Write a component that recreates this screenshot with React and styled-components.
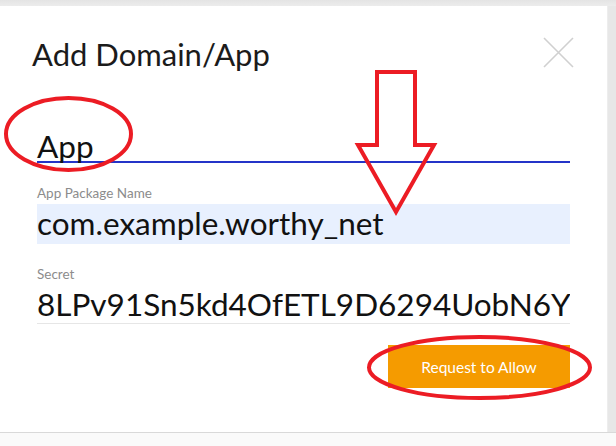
import React from "react";
import styled, { createGlobalStyle } from "styled-components";

const GlobalStyle = createGlobalStyle`
  html, body { margin: 0; padding: 0; }
  body { background: #fafafa; font-family: "Lato", "Liberation Sans", sans-serif; }
`;

const Page = styled.div`
  position: relative;
  width: 616px;
  height: 446px;
  display: flex;
  flex-direction: column;
  background: #fafafa;
  overflow: hidden;
`;

const TopStrip = styled.div`
  height: 6px;
  flex: none;
  background: linear-gradient(to bottom, #e4e4e4, #ececec);
`;

const Middle = styled.div`
  display: flex;
  height: 426px;
  flex: none;
`;

const Gutter = styled.div`
  flex: 1;
  background: #e7e7e7;
  border-left: 1px solid #ededed;
`;

const Footer = styled.div`
  flex: 1;
  border-top: 1px solid #d9d9d9;
  background: #fafafa;
`;

const Modal = styled.div`
  width: 607px;
  flex: none;
  background: #ffffff;
  display: flex;
  flex-direction: column;
`;

const Header = styled.div`
  display: flex;
  justify-content: space-between;
  align-items: flex-start;
  padding: 31px 33px 0 32px;
`;

const Title = styled.h2`
  margin: 2px 0 0 0;
  font-family: "Lato", "Liberation Sans", sans-serif;
  font-weight: 400;
  font-size: 31px;
  line-height: 31px;
  color: #1b1b1b;
`;

const CloseButton = styled.button`
  width: 31px;
  height: 31px;
  padding: 0;
  border: 0;
  background: transparent;
  display: block;
  cursor: pointer;
`;

const Body = styled.div`
  display: flex;
  flex-direction: column;
  padding: 0 37px;
`;

const Value = styled.div`
  font-family: "Lato", "Liberation Sans", sans-serif;
  font-size: 31.5px;
  color: #111;
  white-space: nowrap;
`;

const TypeField = styled(Value)`
  margin-top: 55px;
  height: 36px;
  line-height: 42px;
  border-bottom: 2px solid #2434c8;
`;

const Label = styled.div`
  margin-top: ${(p) => p.$top}px;
  font-family: "Lato", "Liberation Sans", sans-serif;
  font-size: 13.5px;
  line-height: 15px;
  color: #8c8c8c;
`;

const FilledField = styled(Value)`
  margin-top: 3px;
  height: 38px;
  line-height: 38px;
  padding-bottom: 2px;
  background: #e8f0fe;
  overflow: hidden;
`;

const LineField = styled(Value)`
  margin-top: 4px;
  height: 36px;
  line-height: 36px;
  padding-bottom: 1px;
  border-bottom: 1px solid #e6e6e6;
  overflow: hidden;
`;

const Actions = styled.div`
  display: flex;
  justify-content: flex-end;
  margin-top: 21px;
`;

const PrimaryButton = styled.button`
  width: 182px;
  height: 43px;
  border: 0;
  background: #f59b00;
  color: #ffffff;
  font-family: "Lato", "Liberation Sans", sans-serif;
  font-size: 15.5px;
  cursor: pointer;
`;

const Overlay = styled.svg`
  position: absolute;
  left: 0;
  top: 0;
  pointer-events: none;
`;

export default function App() {
  return (
    <>
      <GlobalStyle />
      <Page>
        <TopStrip />
        <Middle>
          <Modal>
            <Header>
              <Title>Add Domain/App</Title>
              <CloseButton aria-label="Close">
                <svg width="31" height="31" viewBox="0 0 31 31">
                  <path d="M1 1 L30 30 M30 1 L1 30" stroke="#d0d0d0" strokeWidth="1.6" fill="none" />
                </svg>
              </CloseButton>
            </Header>
            <Body>
              <TypeField>App</TypeField>
              <Label $top={23}>App Package Name</Label>
              <FilledField>com.example.worthy_net</FilledField>
              <Label $top={23}>Secret</Label>
              <LineField>8LPv91Sn5kd4OfETL9D6294UobN6Y</LineField>
              <Actions>
                <PrimaryButton>Request to Allow</PrimaryButton>
              </Actions>
            </Body>
          </Modal>
          <Gutter />
        </Middle>
        <Footer />
        <Overlay width="616" height="446" viewBox="0 0 616 446">
          <g fill="none" stroke="#ec1c24" strokeWidth="4">
            <ellipse cx="68.5" cy="134" rx="62.5" ry="36" />
            <polygon points="377,72 415,72 415,145 434,145 396,212 358,145 377,145" strokeLinejoin="miter" />
            <ellipse cx="479.5" cy="367.5" rx="110.5" ry="30.5" />
          </g>
        </Overlay>
      </Page>
    </>
  );
}
